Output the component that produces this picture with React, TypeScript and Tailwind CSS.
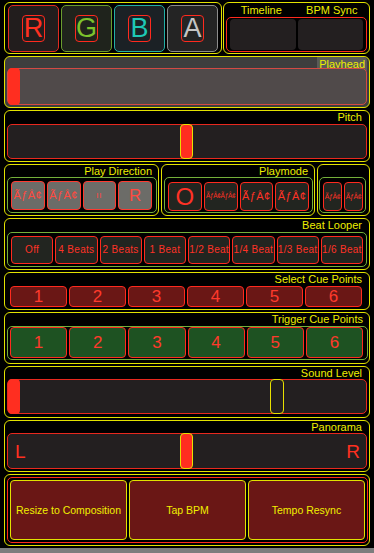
import React from "react";

const Y = "border-[#e2e200]";
const LBL = "flex items-center justify-end pr-[5px] text-[11px] leading-none text-[#eeee00] whitespace-nowrap";

function Handle({ left, variant }: { left: number; variant: "red" | "pitch" | "outline" }) {
  const cls =
    variant === "red"
      ? "absolute top-[-1px] bottom-[-1px] w-[12px] rounded-[4px] bg-[#ff2e20]"
      : variant === "pitch"
      ? "absolute top-[-1px] bottom-[-1px] w-[13px] rounded-[4px] bg-[#ff2e20] border border-[#e8e000]"
      : "absolute top-[-1px] bottom-[-1px] w-[14px] rounded-[4px] bg-[#231f20] border border-[#e8e000]";
  return <div className={cls} style={{ left }} />;
}

function RGBAButton({ letter, bg, border, color }: { letter: string; bg: string; border: string; color: string }) {
  return (
    <div className={`flex-1 rounded-[5px] border ${bg} ${border} flex items-center justify-center`}>
      <div className={`w-[23px] h-[27px] rounded-[4px] border border-[#ff2a1e] flex items-center justify-center text-[27px] leading-none ${color}`}>
        {letter}
      </div>
    </div>
  );
}

const garb = "ÃƒÂ¢";

export default function App() {
  const beats = ["Off", "4 Beats", "2 Beats", "1 Beat", "1/2 Beat", "1/4 Beat", "1/3 Beat", "1/6 Beat"];
  const cues = ["1", "2", "3", "4", "5", "6"];
  return (
    <div className="w-[374px] h-[553px] bg-black flex flex-col font-['Liberation_Sans',sans-serif] overflow-hidden">
      <div className="w-[366px] ml-[4px] pt-[2px] flex flex-col gap-[2px]">
        {/* Top row */}
        <div className="h-[52px] flex gap-[1px]">
          <div className={`w-[218px] rounded-[6px] border ${Y} px-[3px] pt-[2px] pb-[1px] flex gap-[2px]`}>
            <RGBAButton letter="R" bg="bg-[#221d1d]" border="border-[#e02a20]" color="text-[#ff3020]" />
            <RGBAButton letter="G" bg="bg-[#1f231c]" border="border-[#6a9c2e]" color="text-[#7cc22c]" />
            <RGBAButton letter="B" bg="bg-[#1b2125]" border="border-[#22b0a6]" color="text-[#1ec8b4]" />
            <RGBAButton letter="A" bg="bg-[#242424]" border="border-[#8c8c8c]" color="text-[#c4c4c4]" />
          </div>
          <div className={`flex-1 rounded-[6px] border ${Y} px-[2px] pb-[1px] flex flex-col`}>
            <div className="h-[14px] flex text-[11px] leading-none text-[#eeee00]">
              <div className="flex-1 flex items-center justify-center">Timeline</div>
              <div className="flex-1 flex items-center justify-center">BPM Sync</div>
            </div>
            <div className="h-[35px] rounded-[5px] border border-[#ff2a1e] p-[1px] px-[3px] flex gap-[2px]">
              <div className="flex-1 rounded-[4px] bg-[#231f20]" />
              <div className="flex-1 rounded-[4px] bg-[#231f20]" />
            </div>
          </div>
        </div>

        {/* Playhead */}
        <div className={`h-[52px] rounded-[6px] border ${Y} bg-[#3e3e3e] px-[2px] pb-[2px] flex flex-col`}>
          <div className="h-[11px] flex justify-end items-start">
            <div className="h-[14px] px-[2px] bg-[#5a5a58] flex items-center text-[11px] leading-none text-[#eeee00] rounded-tr-[4px]">Playhead</div>
          </div>
          <div className="relative h-[37px] rounded-[5px] border border-[#d44a44] bg-[#504a4a]">
            <Handle left={0} variant="red" />
          </div>
        </div>

        {/* Pitch */}
        <div className={`h-[52px] rounded-[6px] border ${Y} px-[2px] pb-[2px] flex flex-col`}>
          <div className={`h-[13px] ${LBL}`}>Pitch</div>
          <div className="relative h-[35px] rounded-[5px] border border-[#e8281e] bg-[#231f20]">
            <Handle left={172} variant="pitch" />
          </div>
        </div>

        {/* Play direction / Playmode / small */}
        <div className="h-[52px] flex gap-[2px]">
          <div className={`w-[155px] rounded-[6px] border ${Y} pl-[2px] pr-[1px] pb-[2px] flex flex-col`}>
            <div className={`h-[12px] ${LBL}`}>Play Direction</div>
            <div className="h-[36px] rounded-[5px] border border-[#74b03a] pl-[3px] pr-[4px] pt-[3px] pb-[2px] flex gap-[2px]">
              {[garb, garb, "II", "R"].map((t, i) => (
                <div
                  key={i}
                  className={`flex-1 rounded-[4px] border border-[#ff3a30] bg-[#6c6c68] flex items-center justify-center text-[#ff4a40] leading-none ${
                    i === 3 ? "text-[17px]" : i === 2 ? "text-[8px] tracking-[1px]" : "text-[11px] tracking-[0.4px]"
                  }`}
                >
                  {t}
                </div>
              ))}
            </div>
          </div>
          <div className={`w-[154px] rounded-[6px] border ${Y} pl-[2px] pr-[1px] pb-[2px] flex flex-col`}>
            <div className={`h-[12px] ${LBL}`}>Playmode</div>
            <div className="h-[36px] rounded-[5px] border border-[#74b03a] pl-[3px] pr-[3px] pt-[4px] pb-[1px] flex gap-[2px]">
              {["O", garb + garb, garb, garb].map((t, i) => (
                <div
                  key={i}
                  className={`flex-1 rounded-[4px] border border-[#ff2a1e] bg-[#222520] flex items-center justify-center text-[#ff3226] leading-none overflow-hidden whitespace-nowrap ${
                    i === 0 ? "text-[24px]" : i === 1 ? "text-[6.5px] tracking-[-0.3px]" : "text-[11px] tracking-[0.4px]"
                  }`}
                >
                  {t}
                </div>
              ))}
            </div>
          </div>
          <div className={`flex-1 rounded-[6px] border ${Y} pl-[1px] pr-[3px] pb-[2px] flex flex-col`}>
            <div className="h-[12px]" />
            <div className="h-[36px] rounded-[5px] border border-[#74b03a] pl-[3px] pr-[2px] pt-[4px] pb-[1px] flex gap-[2px]">
              {[0, 1].map((i) => (
                <div
                  key={i}
                  className="flex-1 rounded-[4px] border border-[#ff2a1e] bg-[#222520] flex items-center justify-center text-[#ff3226] text-[7px] tracking-[-0.4px] leading-none overflow-hidden whitespace-nowrap"
                >
                  {garb}
                </div>
              ))}
            </div>
          </div>
        </div>

        {/* Beat Looper */}
        <div className={`h-[52px] rounded-[6px] border ${Y} px-[2px] pb-[2px] flex flex-col`}>
          <div className={`h-[13px] ${LBL}`}>Beat Looper</div>
          <div className="h-[35px] rounded-[5px] border border-[#74b03a] pl-[3px] pr-[3px] pt-[3px] pb-[2px] flex gap-[2px]">
            {beats.map((b) => (
              <div
                key={b}
                className="flex-1 rounded-[4px] border border-[#ff2a1e] bg-[#222520] flex items-center justify-center text-[#ff3226] text-[10px] tracking-[0.3px] leading-none whitespace-nowrap overflow-hidden"
              >
                {b}
              </div>
            ))}
          </div>
        </div>

        {/* Select Cue Points */}
        <div className={`h-[38px] rounded-[6px] border ${Y} pl-[5px] pr-[7px] pb-[2px] flex flex-col`}>
          <div className={`h-[13px] ${LBL} mr-[-5px]`}>Select Cue Points</div>
          <div className="h-[21px] flex gap-[2px]">
            {cues.map((c) => (
              <div
                key={c}
                className="flex-1 rounded-[4px] border border-[#ff2a1e] bg-[#6a1715] flex items-center justify-center text-[#ff3a2c] text-[17px] leading-none"
              >
                {c}
              </div>
            ))}
          </div>
        </div>

        {/* Trigger Cue Points */}
        <div className={`h-[52px] rounded-[6px] border ${Y} pl-[2px] pr-[1px] pb-[3px] flex flex-col`}>
          <div className={`h-[13px] ${LBL}`}>Trigger Cue Points</div>
          <div className="h-[34px] rounded-[5px] border border-[#74b03a] pl-[2px] pr-[4px] pb-[1px] flex gap-[2px]">
            {cues.map((c) => (
              <div
                key={c}
                className="flex-1 rounded-[4px] border border-[#ff2a1e] bg-[#1e5222] flex items-center justify-center text-[#ff3a2c] text-[17px] leading-none"
              >
                {c}
              </div>
            ))}
          </div>
        </div>

        {/* Sound Level */}
        <div className={`h-[52px] rounded-[6px] border ${Y} px-[2px] pb-[3px] flex flex-col`}>
          <div className={`h-[12px] ${LBL}`}>Sound Level</div>
          <div className="relative h-[35px] rounded-[5px] border border-[#e8281e] bg-[#231f20]">
            <Handle left={0} variant="red" />
            <Handle left={262} variant="outline" />
          </div>
        </div>

        {/* Panorama */}
        <div className={`h-[52px] rounded-[6px] border ${Y} px-[2px] pb-[2px] flex flex-col`}>
          <div className={`h-[12px] ${LBL}`}>Panorama</div>
          <div className="relative h-[36px] rounded-[5px] border border-[#e8281e] bg-[#231f20] flex items-center justify-between pl-[7px] pr-[6px] text-[19px] leading-none text-[#ff3020]">
            <span>L</span>
            <span>R</span>
            <Handle left={172} variant="pitch" />
          </div>
        </div>

        {/* Bottom buttons */}
        <div className={`h-[72px] rounded-[6px] border ${Y} pl-[2px] pr-[1px] py-[2px] flex flex-col`}>
          <div className="h-[66px] rounded-[5px] border border-[#ff2a1e] p-[2px] flex gap-[2px]">
            {["Resize to Composition", "Tap BPM", "Tempo Resync"].map((t) => (
              <div
                key={t}
                className="flex-1 rounded-[4px] border border-[#e2e200] bg-[#6a1715] flex items-center justify-center text-[#f0f000] text-[10.5px] leading-none whitespace-nowrap"
              >
                {t}
              </div>
            ))}
          </div>
        </div>
      </div>
      <div className="mt-auto h-[5px] bg-[#7d7d7d]" />
    </div>
  );
}
